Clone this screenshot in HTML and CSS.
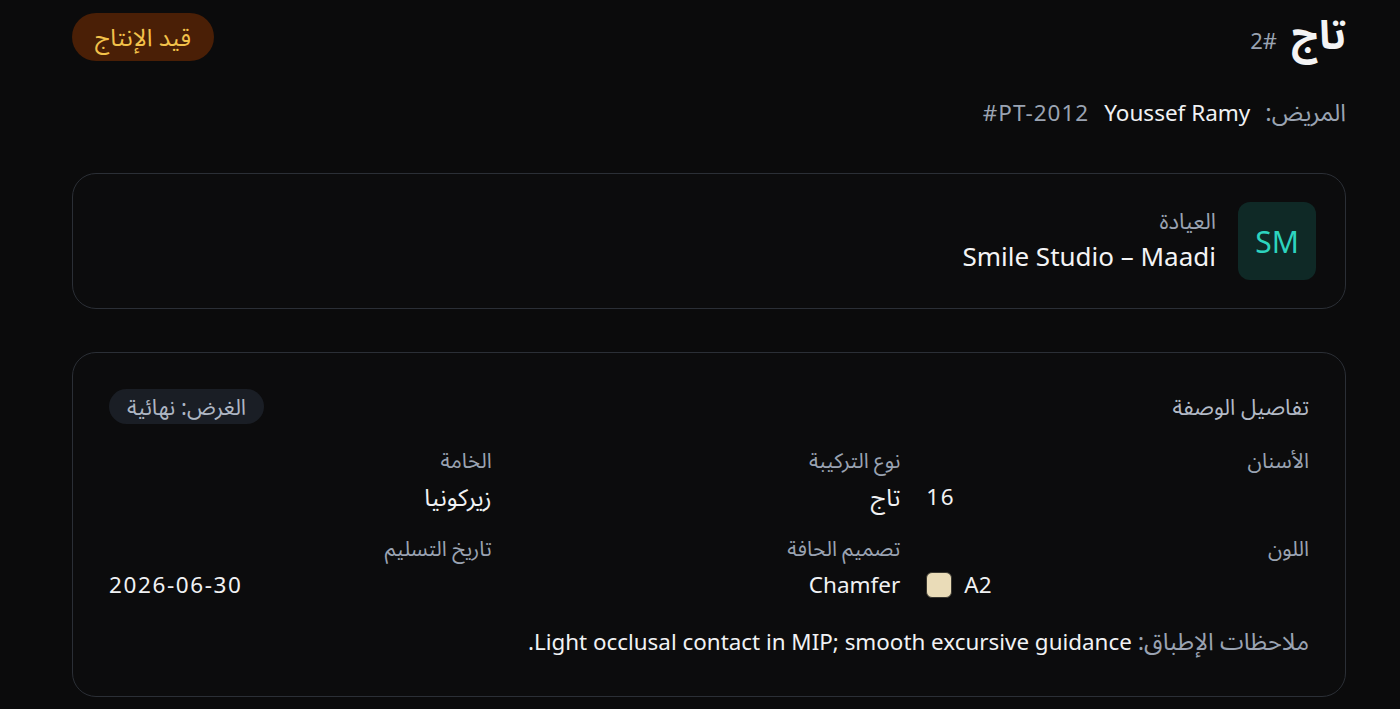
FILE: index.html
```html
<!DOCTYPE html>
<html lang="ar" dir="rtl">
  <head>
    <meta charset="UTF-8" />
    <meta name="viewport" content="width=device-width, initial-scale=1" />
    <title>تاج #2</title>
    <link rel="stylesheet" href="styles.css">
  </head>

  <body>
    <main class="page">
      <header class="top">
        <h1 class="title">تاج <span class="num">#2</span></h1>
        <span class="status">قيد الإنتاج</span>
      </header>

      <p class="patient">
        <span class="muted ar">المريض:</span>
        <span class="name">Youssef Ramy</span>
        <span class="muted code" dir="ltr">#PT-2012</span>
      </p>

      <section class="card clinic">
        <div class="avatar">SM</div>
        <div>
          <div class="label clinic-label">العيادة</div>
          <div class="clinic-name">Smile Studio – Maadi</div>
        </div>
      </section>

      <section class="card rx">
        <div class="rx-head">
          <h2 class="rx-title">تفاصيل الوصفة</h2>
          <span class="tag">الغرض: نهائية</span>
        </div>

        <div class="grid">
          <div class="field">
            <div class="label">الأسنان</div>
            <div class="value num-value" dir="ltr">16</div>
          </div>
          <div class="field">
            <div class="label">نوع التركيبة</div>
            <div class="value ar">تاج</div>
          </div>
          <div class="field">
            <div class="label">الخامة</div>
            <div class="value ar">زيركونيا</div>
          </div>
          <div class="field">
            <div class="label">اللون</div>
            <div class="value shade" dir="ltr"><span class="swatch"></span>A2</div>
          </div>
          <div class="field">
            <div class="label">تصميم الحافة</div>
            <div class="value">Chamfer</div>
          </div>
          <div class="field">
            <div class="label">تاريخ التسليم</div>
            <div class="value num-value" dir="ltr">2026-06-30</div>
          </div>
        </div>

        <p class="notes"><span class="muted ar">ملاحظات الإطباق:</span> Light occlusal contact in MIP; smooth excursive guidance.</p>
      </section>
    </main>
  </body>
</html>
```

FILE: styles.css
```css
body {
  margin: 0;
  background-color: #0b0b0c;
  color: #f1f2f4;
  font-family: "Noto Sans", "Noto Sans Arabic", "DejaVu Sans", sans-serif;
}

.page {
  padding: 12px 54px 14px 72px;
}

.muted {
  color: #9aa3b2;
}

/* header row: title on the right, status pill on the left */
.top {
  display: flex;
  justify-content: space-between;
  align-items: center;
  height: 50px;
}

.title {
  margin: 0;
  font-size: 40px;
  font-weight: 700;
  line-height: 50px;
  color: #f4f4f5;
}

.title .num {
  font-size: 22px;
  font-weight: 400;
  color: #9aa3b2;
  margin-right: 4px;
}

.status {
  background: #4a1f06;
  color: #f3c24a;
  font-size: 24px;
  padding: 0 23px;
  height: 48px;
  line-height: 48px;
  border-radius: 24px;
}

.patient {
  margin: 34px 0 45px;
  font-size: 22.5px;
  line-height: 32px;
  height: 32px;
  display: flex;
  align-items: baseline;
  gap: 15px;
}

.patient .ar {
  font-size: 24px;
}

.patient .code {
  letter-spacing: 1px;
}

.card {
  border: 1px solid #2b2f36;
  border-radius: 24px;
  background: #0c0c0d;
}

.clinic {
  display: flex;
  align-items: center;
  gap: 22px;
  padding: 28px 29px;
  height: 78px;
}

.avatar {
  width: 78px;
  height: 78px;
  border-radius: 12px;
  background: #0f2926;
  color: #2dd4bf;
  font-size: 30px;
  display: flex;
  align-items: center;
  justify-content: center;
}

.label {
  font-size: 21px;
  color: #9aa3b2;
  line-height: 26px;
}

.clinic-label {
  font-size: 22px;
  line-height: 28px;
  margin-top: -3px;
}

.clinic-name {
  font-size: 26px;
  line-height: 36px;
  margin-top: 4px;
  color: #f4f4f5;
}

.rx {
  margin-top: 43px;
  padding: 36px;
}

.rx-head {
  display: flex;
  justify-content: space-between;
  align-items: center;
  height: 35px;
}

.rx-title {
  margin: 0;
  font-size: 22px;
  font-weight: 400;
  line-height: 35px;
  color: #b3bac6;
}

.tag {
  background: #1a1e25;
  color: #aeb6c3;
  font-size: 22px;
  padding: 0 18px;
  height: 35px;
  line-height: 35px;
  border-radius: 18px;
}

/* prescription fields, three per row */
.grid {
  display: grid;
  grid-template-columns: repeat(3, 1fr);
  column-gap: 26px;
  row-gap: 20px;
  margin-top: 23px;
}

.value {
  font-size: 22.5px;
  line-height: 36px;
  margin-top: 6px;
}

.value.ar {
  font-size: 24px;
}

.num-value {
  letter-spacing: 1.6px;
}

.shade {
  display: flex;
  align-items: center;
  gap: 12px;
}

.swatch {
  width: 26px;
  height: 26px;
  box-sizing: border-box;
  border-radius: 6px;
  background: #eadcb8;
  border: 1px solid #3a3830;
}

.notes {
  margin: 20px 0 0;
  font-size: 22.4px;
  line-height: 36px;
}

.notes .ar {
  font-size: 24px;
}
```
